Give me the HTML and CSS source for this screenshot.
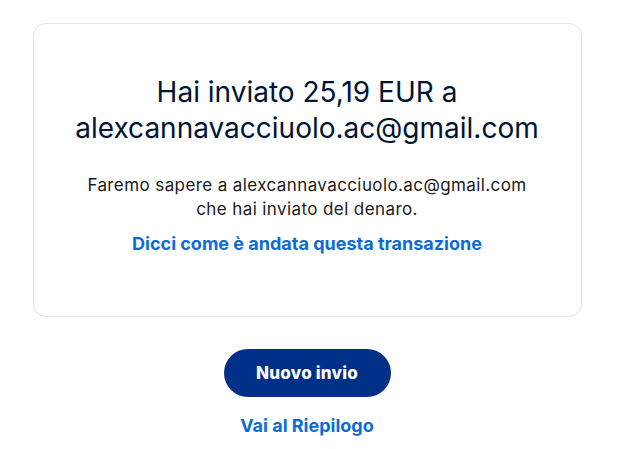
FILE: index.html
```html
<!DOCTYPE html>
<html lang="it">
<head>
<meta charset="utf-8">
<title>Invio completato</title>
<link rel="stylesheet" href="styles.css">
</head>
<body>
<main class="page">
  <section class="card">
    <h1 class="title">Hai inviato 25,19 EUR a<br>alexcannavacciuolo.ac@gmail.com</h1>
    <p class="info">Faremo sapere a alexcannavacciuolo.ac@gmail.com<br>che hai inviato del denaro.</p>
    <a class="link feedback" href="#">Dicci come è andata questa transazione</a>
  </section>
  <div class="actions">
    <button class="btn-primary" type="button">Nuovo invio</button>
    <a class="link summary" href="#">Vai al Riepilogo</a>
  </div>
</main>
</body>
</html>
```
FILE: styles.css
```css
* { box-sizing: border-box; }
html, body { margin: 0; padding: 0; background: #ffffff; }
body {
  font-family: Inter, "Liberation Sans", Arial, sans-serif;
  color: #001435;
}
.page {
  display: flex;
  flex-direction: column;
  align-items: center;
  padding-top: 23px;
  padding-right: 3px;
}
.card {
  width: 549px;
  height: 294px;
  border: 1px solid #e3e3e3;
  border-radius: 13px;
  display: flex;
  flex-direction: column;
  align-items: center;
  text-align: center;
  padding-top: 50px;
}
.title {
  margin: 0;
  font-size: 28px;
  font-weight: 400;
  line-height: 36px;
  color: #001435;
}
.info {
  margin: 27px 0 0;
  font-size: 17px;
  line-height: 24px;
  letter-spacing: 0.4px;
  color: #1a1a1a;
}
.link {
  color: #0b6cd8;
  font-weight: 700;
  text-decoration: none;
  font-size: 18px;
  line-height: 22px;
}
.feedback {
  margin-top: 12px;
}
.actions {
  display: flex;
  flex-direction: column;
  align-items: center;
  margin-top: 32px;
}
.btn-primary {
  width: 167px;
  height: 48px;
  border: 0;
  border-radius: 24px;
  background: #003087;
  color: #ffffff;
  font-family: inherit;
  font-size: 17px;
  font-weight: 800;
  letter-spacing: 0.2px;
}
.summary {
  margin-top: 18px;
}
```
